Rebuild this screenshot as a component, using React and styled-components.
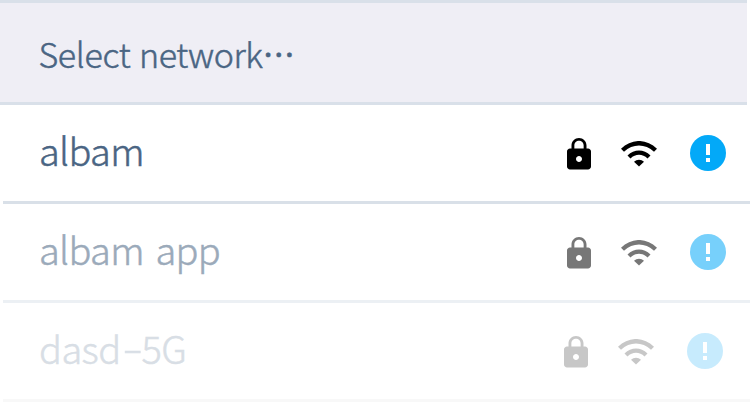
import React from "react";
import styled, { createGlobalStyle } from "styled-components";

const GlobalStyle = createGlobalStyle`
  *, *::before, *::after { box-sizing: border-box; }
  body { margin: 0; background: #fff; }
`;

const Screen = styled.main`
  width: 750px;
  height: 402px;
  overflow: hidden;
  display: flex;
  flex-direction: column;
  background: #fff;
  font-family: "Noto Sans CJK KR", "Noto Sans", sans-serif;
  font-weight: 300;
  -webkit-text-stroke: 0.5px currentColor;
`;

const Header = styled.header`
  width: 747px;
  height: 105px;
  flex: none;
  display: flex;
  align-items: center;
  padding: 2px 38.5px 0;
  background: #efeef5;
  border-top: 3px solid #d9e0e9;
  border-bottom: 3px solid #d9e0e9;
`;

const Title = styled.h1`
  margin: 0;
  font-size: 34px;
  font-weight: inherit;
  line-height: 48px;
  letter-spacing: -0.35px;
  word-spacing: 1.5px;
  color: #4a6583;
  white-space: nowrap;
`;

const Ellipsis = styled.span`
  display: inline-block;
  font-family: "Noto Sans CJK JP", sans-serif;
  font-size: 32px;
  font-weight: 400;
  line-height: 1;
  transform: translateY(-1px);
`;

const List = styled.ul`
  list-style: none;
  margin: 0;
  padding: 0;
`;

const Row = styled.li`
  height: 99px;
  margin-left: 3px;
  padding: 0 ${(p) => p.$inset}px 0 36px;
  display: flex;
  align-items: center;
  justify-content: space-between;
  border-bottom: 3px solid ${(p) => p.$line};
`;

const Name = styled.span`
  font-size: 38px;
  line-height: 60px;
  padding-bottom: 6px;
  letter-spacing: ${(p) => p.$spacing}px;
  word-spacing: 4px;
  color: ${(p) => p.$color};
  white-space: nowrap;
`;

const Dash = styled.span`
  display: inline-block;
  margin: 0 4px 0 5px;
  line-height: 1;
  transform: translateY(-2px) scaleX(1.6);
`;

const Icons = styled.div`
  display: flex;
  align-items: center;
  color: ${(p) => p.$color};

  svg { display: block; flex: none; }
`;

const LockIcon = styled.svg`
  width: 24px;
  height: 32px;
  margin: 1px 30px 0 0;
`;

const WifiIcon = styled.svg`
  width: 36px;
  height: 26px;
  margin: 2px 33px 0 0;
`;

const InfoIcon = styled.svg`
  width: 36px;
  height: 36px;
  color: ${(p) => p.$color};
`;

function NetworkName({ name }) {
  return name.split("-").map((part, i) => (
    <React.Fragment key={i}>
      {i > 0 && <Dash>-</Dash>}
      {part}
    </React.Fragment>
  ));
}

function Network({ network }) {
  return (
    <Row $line={network.line} $inset={network.inset}>
      <Name $color={network.text} $spacing={network.spacing}>
        <NetworkName name={network.name} />
      </Name>
      <Icons $color={network.icon}>
        <LockIcon viewBox="4 1 16 21.333" fill="currentColor" aria-hidden="true">
          <path d="M18 8h-1V6c0-2.76-2.24-5-5-5S7 3.24 7 6v2H6c-1.1 0-2 .9-2 2v10c0 1.1.9 2 2 2h12c1.1 0 2-.9 2-2V10c0-1.1-.9-2-2-2zm-6 9c-1.1 0-2-.9-2-2s.9-2 2-2 2 .9 2 2-.9 2-2 2zm3.1-9H8.9V6c0-1.71 1.39-3.1 3.1-3.1 1.71 0 3.1 1.39 3.1 3.1v2z" />
        </LockIcon>
        <WifiIcon viewBox="0 0 36 26" fill="currentColor" aria-hidden="true">
          <path d="M0 7.7C10.5-2.6 25.5-2.6 36 7.7L33 10.8C24.3 2.3 11.7 2.3 3 10.8Z" />
          <path d="M6.5 14.5C13.2 7.7 22.8 7.7 29.5 14.5L26.5 17.5C21.6 12.5 14.4 12.5 9.5 17.5Z" />
          <path d="M13 20.7C15.9 18 20.1 18 23 20.7L18 25.5Z" />
        </WifiIcon>
        <InfoIcon viewBox="0 0 36 36" $color={network.info} role="img">
          <circle cx="18" cy="18" r="18" fill="currentColor" />
          <path d="M16 9h4v11h-4zM16 23h4v4h-4z" fill="#fff" />
        </InfoIcon>
      </Icons>
    </Row>
  );
}

const networks = [
  { name: "albam", text: "#4a6583", icon: "#000", info: "#03a9f8", line: "#d9e0e8", inset: 24, spacing: -0.7 },
  { name: "albam app", text: "#9baaba", icon: "#777", info: "#77d0fb", line: "#ecf0f4", inset: 24, spacing: -0.7 },
  { name: "dasd-5G", text: "#d8dee5", icon: "#c7c7c7", info: "#c7ebfd", line: "#f8f8f8", inset: 27, spacing: -0.6 },
];

export default function App() {
  return (
    <>
      <GlobalStyle />
      <Screen>
        <Header><Title>Select network<Ellipsis lang="ja">…</Ellipsis></Title></Header>
        <List>
          {networks.map((n) => <Network key={n.name} network={n} />)}
        </List>
      </Screen>
    </>
  );
}
